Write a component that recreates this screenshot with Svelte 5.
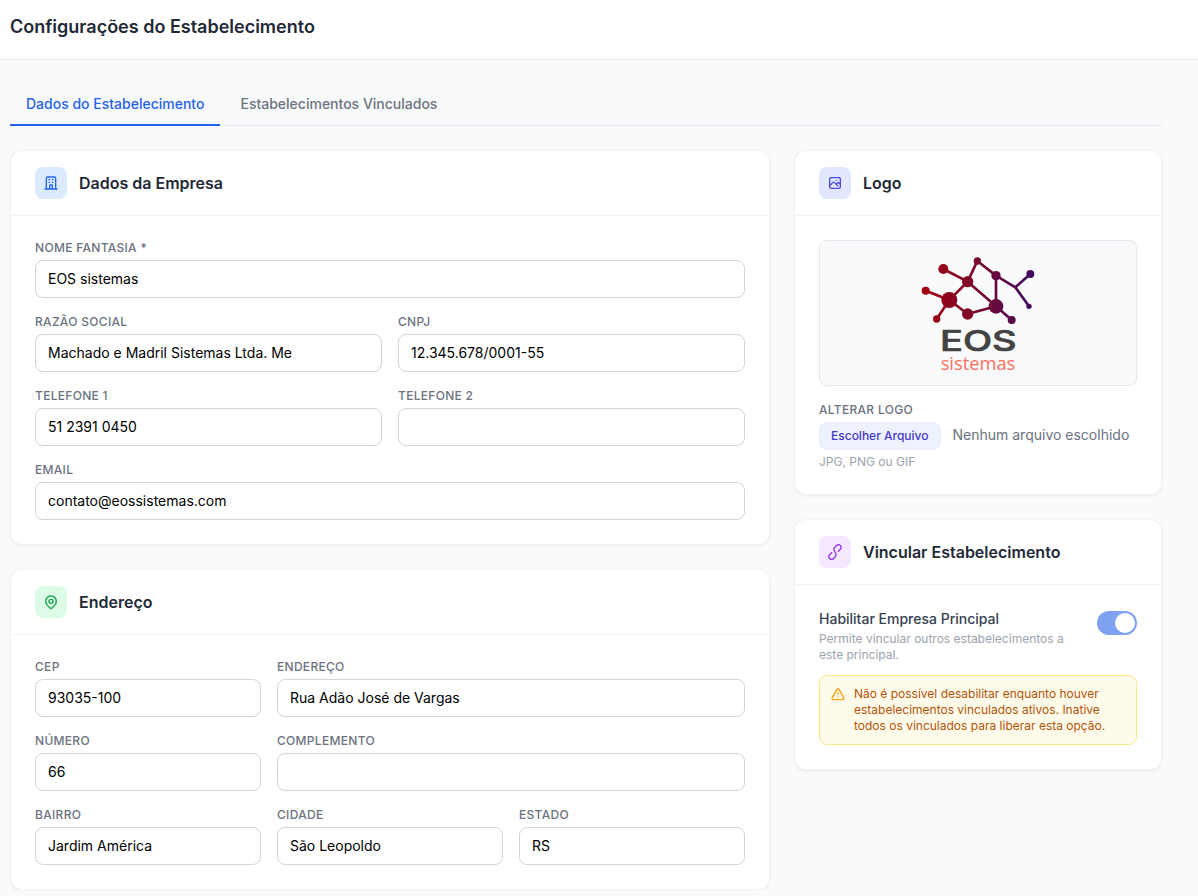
<script>
  const icons = {
    building: ['M19 21V5a2 2 0 00-2-2H7a2 2 0 00-2 2v16m14 0h2m-2 0h-5m-9 0H3m2 0h5M9 7h1m-1 4h1m4-4h1m-1 4h1m-5 10v-5a1 1 0 011-1h2a1 1 0 011 1v5m-4 0h4'],
    pin: ['M17.657 16.657L13.414 20.9a1.998 1.998 0 01-2.827 0l-4.244-4.243a8 8 0 1111.314 0z', 'M15 11a3 3 0 11-6 0 3 3 0 016 0z'],
    photo: ['M4 16l4.586-4.586a2 2 0 012.828 0L16 16m-2-2l1.586-1.586a2 2 0 012.828 0L20 14m-6-6h.01M6 20h12a2 2 0 002-2V6a2 2 0 00-2-2H6a2 2 0 00-2 2v12a2 2 0 002 2z'],
    link: ['M17 11l3-3a4 4 0 00-5.7-5.7l-2.6 2.6C10 6.5 10 9 12 12c2 3 2 5.500.3 7.100l-2.600 2.600a4 4 0 01-5.700-5.700l3-3'],
    warn: ['M12 9v2m0 4h.01m-6.938 4h13.856c1.54 0 2.502-1.667 1.732-3L13.732 4c-.77-1.333-2.694-1.333-3.464 0L3.34 16c-.77 1.333.192 3 1.732 3z']
  };

  const company = [
    { label: 'Nome Fantasia *', value: 'EOS sistemas', span: 2 },
    { label: 'Razão Social', value: 'Machado e Madril Sistemas Ltda. Me', span: 1 },
    { label: 'CNPJ', value: '12.345.678/0001-55', span: 1 },
    { label: 'Telefone 1', value: '51 2391 0450', span: 1 },
    { label: 'Telefone 2', value: '', span: 1 },
    { label: 'Email', value: 'contato@eossistemas.com', span: 2 }
  ];
  const address = [
    { label: 'CEP', value: '93035-100', span: 1 },
    { label: 'Endereço', value: 'Rua Adão José de Vargas', span: 2 },
    { label: 'Número', value: '66', span: 1 },
    { label: 'Complemento', value: '', span: 2 },
    { label: 'Bairro', value: 'Jardim América', span: 1 },
    { label: 'Cidade', value: 'São Leopoldo', span: 1 },
    { label: 'Estado', value: 'RS', span: 1 }
  ];

  const nodes = [
    [130,69,15],[77,134,12],[148,162,24],[110,219,11],[203,107,17],[232,45,11],
    [288,89,14],[391,84,12],[387,181,8],[288,181,22],[335,222,12],[203,204,17]
  ];
  const edges = [
    [130,69,203,107],[77,134,148,162],[148,162,110,219],[148,162,203,107],[148,162,203,204],
    [203,204,288,181],[203,107,232,45],[232,45,288,89],[288,89,346,124],[346,124,391,84],
    [346,124,387,181],[288,89,288,181],[203,107,288,181],[288,181,335,222]
  ];
</script>

{#snippet icon(name)}
  <svg class="ico" viewBox="0 0 24 24" fill="none" stroke="currentColor" stroke-width="2" stroke-linecap="round" stroke-linejoin="round">
    {#each icons[name] as d}<path {d} />{/each}
  </svg>
{/snippet}

{#snippet cardHead(name, tone, title)}
  <div class="card-head">
    <span class="badge {tone}">{@render icon(name)}</span>
    <h2>{title}</h2>
  </div>
{/snippet}

{#snippet field(f)}
  <div class="field" class:span2={f.span === 2}>
    <label>
      <span class="lbl">{f.label}</span>
      <input type="text" value={f.value} />
    </label>
  </div>
{/snippet}

<header class="top"><h1>Configurações do Estabelecimento</h1></header>

<main class="content">
  <nav class="tabs">
    <button class="tab active">Dados do Estabelecimento</button>
    <button class="tab">Estabelecimentos Vinculados</button>
  </nav>

  <div class="layout">
    <div class="col wide">
      <section class="card">
        {@render cardHead('building', 'blue', 'Dados da Empresa')}
        <div class="body form two">
          {#each company as f}{@render field(f)}{/each}
        </div>
      </section>

      <section class="card">
        {@render cardHead('pin', 'green', 'Endereço')}
        <div class="body form three">
          {#each address as f}{@render field(f)}{/each}
        </div>
      </section>
    </div>

    <div class="col">
      <section class="card">
        {@render cardHead('photo', 'indigo', 'Logo')}
        <div class="body">
          <div class="logo-box">
            <svg class="logo" viewBox="9 0 450 405" role="img" aria-label="EOS sistemas">
              <defs>
                <linearGradient id="net" gradientUnits="userSpaceOnUse" x1="70" y1="0" x2="400" y2="0">
                  <stop offset="0" stop-color="#a00010" />
                  <stop offset="0.45" stop-color="#7d0828" />
                  <stop offset="1" stop-color="#3f0a60" />
                </linearGradient>
              </defs>
              <g stroke="url(#net)" stroke-width="8" fill="none">
                {#each edges as e}<path d="M{e[0]} {e[1]}L{e[2]} {e[3]}.01" />{/each}
              </g>
              <g fill="url(#net)">
                {#each nodes as n}<circle cx={n[0]} cy={n[1]} r={n[2]} />{/each}
              </g>
              <text class="eos" x="120" y="315" textLength="230" lengthAdjust="spacingAndGlyphs">EOS</text>
              <text class="sis" x="122" y="371" textLength="224" lengthAdjust="spacingAndGlyphs">sistemas</text>
            </svg>
          </div>
          <div class="lbl change">Alterar Logo</div>
          <div class="file">
            <button class="pick">Escolher Arquivo</button>
            <span class="none">Nenhum arquivo escolhido</span>
          </div>
          <p class="hint">JPG, PNG ou GIF</p>
        </div>
      </section>

      <section class="card">
        {@render cardHead('link', 'purple', 'Vincular Estabelecimento')}
        <div class="body">
          <div class="toggle-row">
            <div class="toggle-text">
              <div class="t-title">Habilitar Empresa Principal</div>
              <div class="t-desc">Permite vincular outros estabelecimentos a este principal.</div>
            </div>
            <span class="switch"><span class="knob"></span></span>
          </div>
          <div class="alert">
            <span class="alert-ico">{@render icon('warn')}</span>
            <p>Não é possível desabilitar enquanto houver estabelecimentos vinculados ativos. Inative todos os vinculados para liberar esta opção.</p>
          </div>
        </div>
      </section>
    </div>
  </div>
</main>

<style>
  :global(body) {
    margin: 0;
    background: #f9fafb;
    font-family: Inter, "Liberation Sans", sans-serif;
  }
  * { box-sizing: border-box; }

  .top {
    height: 60px;
    background: #fff;
    border-bottom: 1px solid #e5e7eb;
    padding: 0 10px;
    display: flex;
    align-items: center;
  }
  h1 {
    margin: 0 0 5px;
    font-size: 18px;
    line-height: 28px;
    font-weight: 600;
    color: #1f2937;
  }
  .content { padding: 24px 36px 0 10px; }

  .tabs {
    display: flex;
    height: 42px;
    border-bottom: 1px solid #e5e7eb;
    margin-bottom: 24px;
  }
  .tab {
    height: 42px;
    padding: 10px 16px;
    margin-right: 4px;
    background: none;
    border: 0;
    border-bottom: 2px solid transparent;
    font: 500 14px/20px Inter, sans-serif;
    color: #6b7280;
  }
  .tab.active { color: #2563eb; border-bottom-color: #2563eb; }

  .layout {
    display: grid;
    grid-template-columns: repeat(3, 1fr);
    gap: 24px;
    align-items: start;
  }
  .col { display: flex; flex-direction: column; gap: 24px; min-width: 0; }
  .wide { grid-column: span 2; }

  .card {
    background: #fff;
    border: 1px solid #f3f4f6;
    border-radius: 12px;
    box-shadow: 0 1px 3px rgba(0, 0, 0, 0.07);
  }
  .card-head {
    display: flex;
    align-items: center;
    gap: 12px;
    padding: 16px 24px;
    border-bottom: 1px solid #f3f4f6;
  }
  .card-head h2 {
    margin: 0;
    font-size: 16px;
    line-height: 24px;
    font-weight: 600;
    color: #1f2937;
  }
  .badge {
    width: 32px;
    height: 32px;
    border-radius: 8px;
    display: flex;
    align-items: center;
    justify-content: center;
  }
  .ico { width: 16px; height: 16px; display: block; }
  .blue { background: #dbeafe; color: #2563eb; }
  .green { background: #dcfce7; color: #16a34a; }
  .indigo { background: #e0e7ff; color: #4f46e5; }
  .purple { background: #f3e8ff; color: #9333ea; }

  .body { padding: 24px; }
  .form { display: grid; gap: 16px; }
  .two { grid-template-columns: repeat(2, 1fr); }
  .three { grid-template-columns: repeat(3, 1fr); }
  .field { min-width: 0; }
  .span2 { grid-column: span 2; }

  .lbl {
    display: block;
    font-size: 12px;
    line-height: 16px;
    font-weight: 500;
    color: #6b7280;
    text-transform: uppercase;
    letter-spacing: 0.3px;
    margin-bottom: 4px;
  }
  input {
    display: block;
    width: 100%;
    height: 38px;
    padding: 0 12px 2px;
    border: 1px solid #d1d5db;
    border-radius: 8px;
    background: #fff;
    font: 400 14px/20px Inter, sans-serif;
    color: #000;
    outline: none;
  }

  .logo-box {
    height: 146px;
    background: #f9fafb;
    border: 1px solid #e5e7eb;
    border-radius: 8px;
    display: flex;
    align-items: center;
    justify-content: center;
    margin-bottom: 16px;
  }
  .logo { width: 150px; height: 135px; display: block; }
  .eos {
    font: 500 86px Inter, sans-serif;
    fill: #434343;
    stroke: #434343;
    stroke-width: 2px;
  }
  .sis {
    font: 500 52px "Open Sans", sans-serif;
    fill: #fb6f5f;
  }

  .file { display: flex; align-items: center; gap: 12px; height: 28px; }
  .pick {
    height: 28px;
    padding: 0 12px;
    border: 0;
    border-radius: 8px;
    background: #eef2ff;
    color: #4338ca;
    font: 500 12px/16px Inter, sans-serif;
  }
  .none { font-size: 14px; line-height: 20px; color: #6b7280; margin-bottom: 2px; }
  .hint {
    margin: 4px 0 0;
    font-size: 12px;
    line-height: 16px;
    color: #9ca3af;
  }

  .toggle-row { display: flex; justify-content: space-between; gap: 16px; }
  .toggle-text { flex: 1; min-width: 0; }
  .t-title { font-size: 14px; line-height: 20px; font-weight: 500; color: #374151; }
  .t-desc { margin-top: 2px; font-size: 12px; line-height: 16px; color: #9ca3af; }
  .switch {
    flex: none;
    width: 40px;
    height: 24px;
    margin-top: 2px;
    border-radius: 12px;
    background: #7ea1f1;
    display: flex;
    align-items: center;
    justify-content: flex-end;
    padding: 2px;
  }
  .knob { width: 20px; height: 20px; border-radius: 50%; background: #fff; }

  .alert {
    margin-top: 12px;
    display: flex;
    gap: 8px;
    padding: 10px;
    background: #fffbeb;
    border: 1px solid #fde68a;
    border-radius: 8px;
  }
  .alert p { margin: 0; font-size: 12px; line-height: 16px; color: #b45309; }
  .alert-ico { flex: none; width: 16px; color: #f59e0b; padding-top: 1px; }
</style>
